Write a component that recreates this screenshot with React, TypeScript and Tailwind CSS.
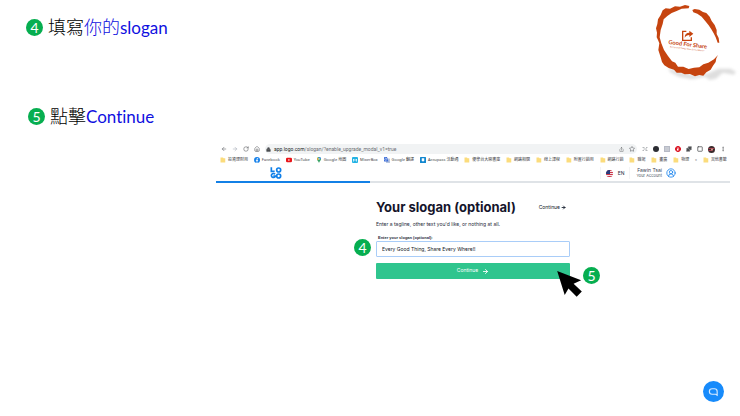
import React from "react";
import {
  ArrowLeft,
  ArrowRight,
  CircleUserRound,
  House,
  Lock,
  MoreVertical,
  Puzzle,
  RotateCw,
  Share,
  Square,
  Star,
} from "lucide-react";

type Bookmark = {
  label: string;
  icon: "folder" | "facebook" | "youtube" | "maps" | "mixer" | "translate" | "accupass";
};

const bookmarks: Bookmark[] = [
  { label: "投資理財用", icon: "folder" },
  { label: "Facebook", icon: "facebook" },
  { label: "YouTube", icon: "youtube" },
  { label: "Google 地圖", icon: "maps" },
  { label: "MixerBox", icon: "mixer" },
  { label: "Google 翻譯", icon: "translate" },
  { label: "Accupass 活動通", icon: "accupass" },
  { label: "優學台大開書庫", icon: "folder" },
  { label: "網路相關", icon: "folder" },
  { label: "線上課程", icon: "folder" },
  { label: "附置行銷用", icon: "folder" },
  { label: "網路行銷", icon: "folder" },
  { label: "職場", icon: "folder" },
  { label: "畫廣", icon: "folder" },
  { label: "物理", icon: "folder" },
];

function StepBadge({ n }: { n: number }) {
  return (
    <span className="flex size-[17px] shrink-0 items-center justify-center rounded-full bg-[#06ae50] font-['Lato',sans-serif] text-[14px] leading-none text-white">
      {n}
    </span>
  );
}

function BookmarkIcon({ icon }: { icon: Bookmark["icon"] }) {
  switch (icon) {
    case "facebook":
      return (
        <svg viewBox="0 0 12 12" className="size-1.5 shrink-0">
          <circle cx="6" cy="6" r="6" fill="#1681ea" />
          <path d="M5.2 12V7.5H3.8V5.8h1.4V4.6C5.2 3.1 6 2.400 7.300 2.400h1v1.500h-.7c-.6 0-.8.3-.8.8v1.100h1.500l-.2 1.700H6.800V12z" fill="#fff" />
        </svg>
      );
    case "youtube":
      return (
        <svg viewBox="0 0 12 12" className="size-1.5 shrink-0">
          <rect y="1.500" width="12" height="9" rx="2.500" fill="#e8161b" />
          <path d="M4.800 4l3.400 2-3.400 2z" fill="#fff" />
        </svg>
      );
    case "maps":
      return (
        <svg viewBox="0 0 12 12" className="size-1.5 shrink-0">
          <path d="M6 0a4 4 0 0 0-4 4c0 3 3.200 4.500 4 8 .8-3.500 4-5 4-8a4 4 0 0 0-4-4z" fill="#34a264" />
          <path d="M6 0a4 4 0 0 1 4 4L6 4z" fill="#4285f4" />
          <path d="M2 4a4 4 0 0 0 1 2.600L6 4 3.200 1.200A4 4 0 0 0 2 4z" fill="#e9a53a" />
          <circle cx="6" cy="4" r="1.400" fill="#fff" />
        </svg>
      );
    case "mixer":
      return (
        <svg viewBox="0 0 12 12" className="size-1.5 shrink-0">
          <rect width="12" height="12" rx="2" fill="#24b3e4" />
          <path d="M3 9V4l3 3 3-3v5" fill="none" stroke="#fff" strokeWidth="1.500" />
        </svg>
      );
    case "translate":
      return (
        <svg viewBox="0 0 12 12" className="size-1.5 shrink-0">
          <rect x="4" y="3" width="8" height="9" rx="1" fill="#b9c6de" />
          <path d="M1 0h5l3 9H1a1 1 0 0 1-1-1V1a1 1 0 0 1 1-1z" fill="#3f6fd8" />
          <path d="M5.500 3.500H3.800M5.600 4.800a2 2 0 1 1-.6-1.700" fill="none" stroke="#fff" />
        </svg>
      );
    case "accupass":
      return (
        <svg viewBox="0 0 12 12" className="size-1.5 shrink-0">
          <rect width="12" height="12" rx="1" fill="#1287cf" />
          <path d="M3.500 2.500h5v4.500L6 9.500 3.500 7z" fill="#fff" />
        </svg>
      );
    default:
      return (
        <svg viewBox="0 0 12 12" className="size-1.5 shrink-0">
          <path d="M1 1h5l1 1.500h3.500V11H1z" fill="#fbdc7c" />
        </svg>
      );
  }
}

function BookmarkLink({ label, icon }: Bookmark) {
  return (
    <a href="#" className="flex items-center gap-0.5 whitespace-nowrap">
      <BookmarkIcon icon={icon} />
      {label}
    </a>
  );
}

function BrandLogo() {
  return (
    <svg viewBox="0 0 300 255" className="h-[85px] w-[100px] shrink-0" aria-label="Good For Share">
      <defs>
        <filter id="soft" x="-20%" y="-50%" width="140%" height="200%">
          <feGaussianBlur stdDeviation="4" />
        </filter>
      </defs>
      <path
        d="M85 203L115 215 165 226 205 220 235 206 272 206 288 216 282 224 248 218 228 236 208 240 196 230 156 238 116 230 90 216z"
        fill="#dedede"
        filter="url(#soft)"
      />
      <path
        d="M148 18L135 15 120 20 105 19 90 26 77 25 68 31 62 45 54 58 52 72 48 85 51 98 50 112 54 120 58 130 55 150 62 172 66 186 73 196 86 204 102 209 110 218 124 218 134 223 150 222 165 229 178 225 190 227 199 217 212 209 219 197 227 186 229 175 234 165 222 178 205 188 190 193 178 202 162 203 146 207 130 200 114 200 106 188 96 184 84 168 72 150 64 130 59 112 62 90 68 72 71 58 82 48 95 39 110 33 125 26 146 25z"
        fill="#c6440f"
      />
      <path
        d="M157 30L164 27 178 29 189 36 199 39 209 50 215 63 224 75 230 90 230 102 236 114 238 128 233 128 227 112 221 100 214 88 206 76 195 62 185 50 172 41 160 37z"
        fill="#c6440f"
      />
      <path d="M139 94h-11v27h26v-9" fill="none" stroke="#c6440f" strokeWidth="4" />
      <path d="M134 113c0-10 5-15 14-15v-6l12 9-12 10v-6c-7 0-10 3-14 8z" fill="#c6440f" />
      <g transform="rotate(7 144 135)" fill="#c6440f" textAnchor="middle">
        <text x="143" y="139" className="font-['Lato',cursive] text-[17px] font-bold">
          Good For Share
        </text>
        <text x="143" y="149" className="font-['Lato',cursive] text-[6px]">
          Every Good Thing, Share Every Where!!
        </text>
      </g>
    </svg>
  );
}

function Toolbar() {
  return (
    <div className="flex h-3 items-center gap-[5px] pl-[5px] pr-1 text-[#4b4d50]">
      <ArrowLeft size={6} />
      <ArrowRight size={6} className="text-gray-400" />
      <RotateCw size={6} />
      <House size={6} />
      <div className="flex h-2.5 flex-1 items-center gap-[3px] rounded-full bg-[#f1f3f4] pl-px pr-0.5">
        <Lock size={5} fill="currentColor" />
        <span className="flex-1 font-['Roboto',sans-serif] text-[5px] leading-none text-[#6b6e73]">
          <span className="text-[#202124]">app.logo.com</span>
          /slogan/?enable_upgrade_modal_v1=true
        </span>
        <Share size={5} />
        <Star size={6} className="ml-0.5" />
      </div>
      <svg viewBox="0 0 12 12" className="size-1.5">
        <path d="M1 3h4M8 3h3M3 6h7M1 9h3M7 9h4" stroke="#b5b8bb" strokeWidth="2" />
      </svg>
      <span className="size-1.5 rounded-full bg-[#2c2d33]" />
      <svg viewBox="0 0 12 12" className="size-1.5">
        <rect width="12" height="12" fill="#b6bac5" />
        <path d="M2 4h8M2 8h8" stroke="#fff" />
      </svg>
      <svg viewBox="0 0 12 12" className="size-1.5">
        <path d="M4 0h4l4 4v4l-4 4H4L0 8V4z" fill="#dc1c2b" />
        <path d="M5 3h2v6H4V6h1z" fill="#fff" />
      </svg>
      <Puzzle size={6} fill="currentColor" />
      <Square size={6} strokeWidth={3} />
      <svg viewBox="0 0 14 14" className="size-[7px]">
        <circle cx="7" cy="7" r="7" fill="#3b2a2c" />
        <path d="M1 5h12M1 9h8" stroke="#c7475c" strokeWidth="1.500" />
        <circle cx="8" cy="7" r="2" fill="#d9a58f" />
      </svg>
      <MoreVertical size={6} />
    </div>
  );
}

function SiteHeader() {
  return (
    <header>
      <div className="flex h-4 items-center justify-between px-[54px]">
        <svg viewBox="0 0 36 36" className="size-3" aria-label="LOGO">
          <g fill="none" stroke="#0f7fe8" strokeWidth="5">
            <path d="M4 1v12h10" />
            <circle cx="26" cy="9" r="6" />
            <path d="M15 22A6 6 0 1 0 16 27h-6" />
            <circle cx="26" cy="27" r="6" />
          </g>
        </svg>
        <div className="flex items-center gap-1.5">
          <button className="flex h-3 items-center gap-[5px] border-x border-gray-100 px-[5px] text-[5px] leading-none text-gray-800">
            <svg viewBox="0 0 14 14" className="size-[7px]">
              <clipPath id="flag">
                <circle cx="7" cy="7" r="7" />
              </clipPath>
              <g clipPath="url(#flag)">
                <rect width="14" height="14" fill="#f2e4e6" />
                <path d="M0 1h14M0 5h14M0 9h14M0 13h14" stroke="#cc3347" strokeWidth="2" />
                <rect width="8" height="8" fill="#283c7c" />
              </g>
            </svg>
            EN
          </button>
          <a href="#" className="flex items-center gap-1">
            <span className="text-right text-[4px] leading-[6px] text-gray-600">
              <span className="block text-[5px] text-gray-700">Fawin Tsai</span>
              Your Account
            </span>
            <CircleUserRound size={10} className="text-[#1a84ee]" />
          </a>
        </div>
      </div>
      <div className="flex h-0.5 bg-[#dfe3e7]">
        <div className="w-[30%] bg-[#1380e6]" />
      </div>
    </header>
  );
}

function SloganForm() {
  return (
    <form className="mx-auto mt-4 w-[194px]" onSubmit={(e) => e.preventDefault()}>
      <div className="flex items-center justify-between pr-1">
        <h1 className="whitespace-nowrap text-[13px] font-bold leading-4 text-[#14142b]">
          Your slogan (optional)
        </h1>
        <a href="#" className="flex items-center gap-px text-[5px] leading-none text-gray-900">
          Continue
          <ArrowRight size={5} strokeWidth={4} />
        </a>
      </div>
      <p className="mt-1.5 text-[5px] leading-[6px] text-gray-800">
        Enter a tagline, other text you'd like, or nothing at all.
      </p>
      <label
        htmlFor="slogan"
        className="mt-2 block pl-0.5 font-['Liberation_Sans',sans-serif] text-[4px] font-bold leading-[6px] text-gray-800"
      >
        Enter your slogan (optional):
      </label>
      <div className="relative">
        <input
          id="slogan"
          type="text"
          defaultValue="Every Good Thing, Share Every Where!!"
          className="block h-4 w-full rounded-[1px] border border-[#a9cdf8] px-[5px] text-[5px] text-gray-900 outline-none"
        />
        <div className="absolute -left-[22px] -top-0.5">
          <StepBadge n={4} />
        </div>
      </div>
      <div className="relative mt-1.5">
        <button
          type="submit"
          className="flex h-4 w-full items-center justify-center gap-1 rounded-[1px] bg-[#2fc58e] text-[5px] text-white"
        >
          Continue
          <ArrowRight size={7} strokeWidth={3} />
        </button>
        <svg viewBox="0 0 72 76" className="absolute left-[181px] top-2 h-[26px] w-[25px]">
          <path d="M0 0L70 27 48 37 72 60 57 75 33 51 22 70z" fill="#000" />
        </svg>
        <div className="absolute left-[207px] top-1">
          <StepBadge n={5} />
        </div>
      </div>
    </form>
  );
}

export default function App() {
  return (
    <main className="min-h-screen bg-white">
      <section className="flex items-start justify-between pl-[26px] font-['Lato','Noto_Sans_CJK_TC',sans-serif] text-[17px] leading-6 [font-variant-ligatures:none]">
        <div className="flex flex-col gap-16 pt-[15px]">
          <div className="flex items-center gap-[5px]">
            <StepBadge n={4} />
            <p className="text-[#1010e0]">
              <span className="text-[18px] font-light text-black">填寫</span>
              <span className="text-[18px] font-light">你的</span>
              slogan
            </p>
          </div>
          <div className="flex items-center gap-[5px] pl-0.5">
            <StepBadge n={5} />
            <p className="text-[#1010e0]">
              <span className="text-[18px] font-light text-black">點擊</span>
              Continue
            </p>
          </div>
        </div>
        <BrandLogo />
      </section>

      <section className="mt-3.5 pl-54 pr-2.5 font-['Inter',sans-serif]">
        <Toolbar />
        <nav className="flex h-2.5 items-center justify-between pl-1 pr-[3px] font-['Noto_Sans','Noto_Sans_CJK_TC',sans-serif] text-[4px] leading-none text-[#3c4043]">
          {bookmarks.map((b) => (
            <BookmarkLink key={b.label} {...b} />
          ))}
          <span>»</span>
          <BookmarkLink label="其他書籤" icon="folder" />
        </nav>
        <SiteHeader />
        <SloganForm />
      </section>

      <button
        aria-label="Chat"
        className="fixed bottom-3.5 right-4 flex size-[21px] items-center justify-center rounded-full bg-[#178bfb]"
      >
        <svg viewBox="0 0 24 24" className="size-[11px]" fill="none" stroke="#d6eaff" strokeWidth="2.500">
          <path d="M20 20l-3-2H9a6 6 0 0 1-6-6v0a6 6 0 0 1 6-6h5a6 6 0 0 1 6 6z" />
        </svg>
      </button>
    </main>
  );
}
